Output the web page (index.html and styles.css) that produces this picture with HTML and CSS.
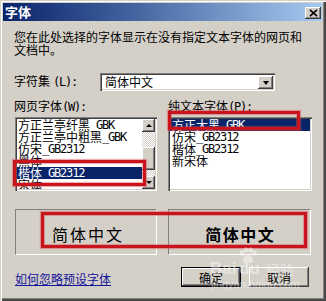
FILE: index.html
```html
<!DOCTYPE html>
<html lang="zh-CN">
<head>
<meta charset="utf-8">
<title>字体</title>
<link rel="stylesheet" href="styles.css">
</head>
<body>
<div class="window">
  <div class="titlebar">
    <span class="title">字体</span>
    <span class="close"><svg width="9" height="8" viewBox="0 0 9 8"><path d="M1 0.8 L8 7.2 M8 0.8 L1 7.2" stroke="#000" stroke-width="1.7"/></svg></span>
  </div>
  <div class="content">
    <p class="desc">您在此处选择的字体显示在没有指定文本字体的网页和<br>文档中。</p>
    <div class="charset-row">
      <span class="charset-label">字符集<span class="en gap">(L):</span></span>
      <div class="select">
        <span class="select-text">简体中文</span>
        <span class="drop-btn"><span class="tri-down"></span></span>
      </div>
    </div>
    <div class="lists">
      <div class="col">
        <div class="col-label">网页字体<span class="en">(W):</span></div>
        <div class="listbox listbox-left">
          <div class="items">
            <div class="item">方正兰亭纤黑<span class="en">_GBK</span></div>
            <div class="item">方正兰亭中粗黑<span class="en">_GBK</span></div>
            <div class="item">仿宋<span class="en">_GB2312</span></div>
            <div class="item">黑体</div>
            <div class="item sel">楷体<span class="en">_GB2312</span></div>
            <div class="item">宋体</div>
          </div>
          <div class="scrollbar">
            <div class="sb-btn"><span class="tri-up"></span></div>
            <div class="sb-track"><div class="thumb"></div></div>
            <div class="sb-btn"><span class="tri-down small"></span></div>
          </div>
        </div>
      </div>
      <div class="col">
        <div class="col-label">纯文本字体<span class="en">(P):</span></div>
        <div class="listbox listbox-right">
          <div class="items">
            <div class="item sel">方正大黑<span class="en">_GBK</span></div>
            <div class="item">仿宋<span class="en">_GB2312</span></div>
            <div class="item">楷体<span class="en">_GB2312</span></div>
            <div class="item">新宋体</div>
          </div>
        </div>
      </div>
    </div>
    <div class="previews">
      <div class="pane pane-left kai">简体中文</div>
      <div class="pane pane-right boldface">简体中文</div>
    </div>
    <div class="footer">
      <a class="link" href="#">如何忽略预设字体</a>
      <div class="buttons">
        <button class="btn default">确定</button>
        <button class="btn">取消</button>
      </div>
    </div>
  </div>

  <div class="mark mark-left-list"></div>
  <div class="mark mark-right-list"></div>
  <div class="mark mark-preview"></div>

  <div class="watermark">
    <svg class="paw" width="20" height="18" viewBox="0 0 20 18">
      <ellipse cx="4" cy="6" rx="2.2" ry="2.8" fill="#fff"/>
      <ellipse cx="8" cy="2.8" rx="2.2" ry="2.6" fill="#fff"/>
      <ellipse cx="12.5" cy="2.8" rx="2.2" ry="2.6" fill="#fff"/>
      <ellipse cx="16.5" cy="6" rx="2.2" ry="2.8" fill="#fff"/>
      <path d="M10 8 C6 8 4 13 5 15 C6 17 9 16 10 16 C11 16 14 17 15 15 C16 13 14 8 10 8 Z" fill="#fff"/>
    </svg>
    <span class="wm-bai">Bai</span><span class="wm-du">du</span><span class="wm-jy">经验</span>
    <span class="wm-url">jingyan.baidu.com</span>
  </div>
</div>
</body>
</html>
```
FILE: styles.css
```css
* {
  box-sizing: border-box;
  margin: 0;
  padding: 0;
}

html, body {
  width: 326px;
  height: 301px;
  overflow: hidden;
  background: #d4d0c8;
}

body {
  font-family: "Noto Sans CJK SC", "Noto Sans", sans-serif;
  font-size: 12px;
  color: #000;
}

.en {
  font-family: "DejaVu Sans Mono", "Liberation Mono", monospace;
  font-size: 12px;
  letter-spacing: -1.2px;
}

.en.gap {
  margin-left: 3px;
}

.window {
  position: relative;
  width: 326px;
  height: 301px;
  background: #d4d0c8;
  padding: 3px 4px 4px 3px;
  box-shadow:
    inset 1px 1px #d4d0c8,
    inset 2px 2px #ffffff,
    inset -1px -1px #404040,
    inset -2px -2px #505050,
    inset -3px -3px #808080;
  display: flex;
  flex-direction: column;
}

/* Title bar */
.titlebar {
  height: 18px;
  display: flex;
  align-items: center;
  justify-content: space-between;
  background: linear-gradient(to right, #0a246a 0%, #3a5a98 35%, #a6caf0 100%);
  padding: 0 1px 0 2px;
}

.title {
  color: #fff;
  font-weight: bold;
  font-size: 13px;
  line-height: 18px;
}

.close {
  width: 16px;
  height: 12px;
  margin-top: 2px;
  background: #d4d0c8;
  box-shadow:
    inset -1px -1px #404040,
    inset 1px 1px #ffffff,
    inset -2px -2px #808080;
  display: flex;
  align-items: center;
  justify-content: center;
}

/* Content */
.content {
  flex: 1;
  display: flex;
  flex-direction: column;
  padding: 9px 0 0 11px;
}

.desc {
  line-height: 13px;
  height: 26px;
}

.charset-row {
  margin-top: 17px;
  height: 18px;
  display: flex;
  align-items: center;
}

.charset-label {
  width: 86px;
  line-height: 16px;
  padding-bottom: 2px;
}

.select {
  width: 175px;
  height: 18px;
  background: #fff;
  box-shadow:
    inset 1px 1px #808080,
    inset 2px 2px #404040,
    inset -1px -1px #ffffff,
    inset -2px -2px #d4d0c8;
  padding: 2px;
  display: flex;
  align-items: center;
}

.select-text {
  flex: 1;
  padding-left: 3px;
  line-height: 14px;
}

.drop-btn {
  width: 15px;
  height: 13px;
  margin-top: 1px;
  background: #d4d0c8;
  box-shadow:
    inset -1px -1px #404040,
    inset 1px 1px #ffffff,
    inset -2px -2px #808080;
  display: flex;
  align-items: center;
  justify-content: center;
}

.tri-down {
  width: 0;
  height: 0;
  border-left: 3.5px solid transparent;
  border-right: 3.5px solid transparent;
  border-top: 4px solid #000;
}

.tri-down.small,
.tri-up {
  border-left-width: 3px;
  border-right-width: 3px;
}

.tri-down.small {
  border-top-width: 3px;
}

.tri-up {
  width: 0;
  height: 0;
  border-left: 3px solid transparent;
  border-right: 3px solid transparent;
  border-bottom: 3px solid #000;
}

/* Lists */
.lists {
  margin-top: 9px;
  display: grid;
  grid-template-columns: 144px 144px;
  column-gap: 10px;
}

.col {
  display: flex;
  flex-direction: column;
}

.col-label {
  line-height: 12px;
  height: 12px;
  margin-bottom: 5px;
}

.listbox {
  height: 74px;
  background: #fff;
  box-shadow:
    inset 1px 1px #808080,
    inset 2px 2px #404040,
    inset -1px -1px #ffffff,
    inset -2px -2px #d4d0c8;
  padding: 2px;
  display: flex;
}

.listbox-left {
  margin: 0 1px;
}

.items {
  flex: 1;
  overflow: hidden;
}

.item {
  height: 12px;
  line-height: 12px;
  padding-left: 1px;
  white-space: nowrap;
}

.listbox-right .item {
  padding-left: 2px;
}

.item .en {
  line-height: 12px;
  vertical-align: 1px;
}

.item.sel {
  background: #0a246a;
  color: #fff;
}

.scrollbar {
  width: 13px;
  display: flex;
  flex-direction: column;
}

.sb-btn {
  height: 13px;
  background: #d4d0c8;
  box-shadow:
    inset -1px -1px #404040,
    inset 1px 1px #ffffff,
    inset -2px -2px #808080;
  display: flex;
  align-items: center;
  justify-content: center;
}

.sb-track {
  flex: 1;
  background: repeating-conic-gradient(#d4d0c8 0 25%, #ffffff 0 50%) 0 0 / 2px 2px;
  padding-top: 15px;
}

.thumb {
  height: 23px;
  background: #d4d0c8;
  box-shadow:
    inset -1px -1px #404040,
    inset 1px 1px #ffffff,
    inset -2px -2px #808080;
}

/* Previews */
.previews {
  margin-top: 18px;
  display: grid;
  grid-template-columns: 144px 144px;
  column-gap: 10px;
}

.pane {
  height: 46px;
  border: 1px solid;
  border-color: #808080 #ffffff #ffffff #808080;
  display: flex;
  align-items: center;
  justify-content: center;
  font-size: 16px;
  padding-top: 4px;
}

.pane-left {
  margin: 0 1px;
}

.pane-right {
  margin-right: 1px;
}

.kai {
  font-weight: normal;
  letter-spacing: 2px;
  padding-left: 4px;
}

.boldface {
  font-weight: bold;
  letter-spacing: 1.5px;
  padding-left: 1.5px;
}

/* Footer */
.footer {
  margin-top: 12px;
  height: 20px;
  display: flex;
  align-items: center;
  padding-right: 13px;
}

.link {
  color: #14149a;
  text-decoration: underline;
  line-height: 12px;
  padding-left: 1px;
  padding-top: 3px;
}

.buttons {
  margin-left: auto;
  display: flex;
  gap: 8px;
}

.btn {
  width: 60px;
  height: 20px;
  border: none;
  background: #d4d0c8;
  font-family: "Noto Sans CJK SC", sans-serif;
  font-size: 12px;
  color: #000;
  box-shadow:
    inset -1px -1px #404040,
    inset 1px 1px #ffffff,
    inset -2px -2px #808080;
  display: flex;
  align-items: center;
  justify-content: center;
}

.btn.default {
  border: 1px solid #000;
}

/* Red annotation boxes */
.mark {
  position: absolute;
  border: 3px solid #c8141c;
  box-shadow: 0 0 1px 1px rgba(220, 70, 70, 0.45), inset 0 0 1px 1px rgba(220, 70, 70, 0.45);
}

.mark-left-list {
  left: 13px;
  top: 160px;
  width: 133px;
  height: 26px;
}

.mark-right-list {
  left: 168px;
  top: 111px;
  width: 132px;
  height: 19px;
}

.mark-preview {
  left: 41px;
  top: 212px;
  width: 266px;
  height: 36px;
}

/* Watermark */
.watermark {
  position: absolute;
  left: 208px;
  top: 246px;
  width: 100px;
  height: 50px;
  opacity: 0.45;
  color: #fff;
  pointer-events: none;
}

.paw {
  position: absolute;
  left: 30px;
  top: 1px;
}

.wm-bai,
.wm-du {
  position: absolute;
  top: 13px;
  font-family: "Liberation Sans", sans-serif;
  font-weight: bold;
  font-size: 17px;
  line-height: 20px;
}

.wm-bai {
  left: 2px;
}

.wm-du {
  left: 31px;
}

.wm-jy {
  position: absolute;
  left: 58px;
  top: 15px;
  font-size: 14px;
  line-height: 16px;
}

.wm-url {
  position: absolute;
  left: 3px;
  top: 32px;
  font-family: "Liberation Sans", sans-serif;
  font-size: 11px;
  line-height: 12px;
}
```
